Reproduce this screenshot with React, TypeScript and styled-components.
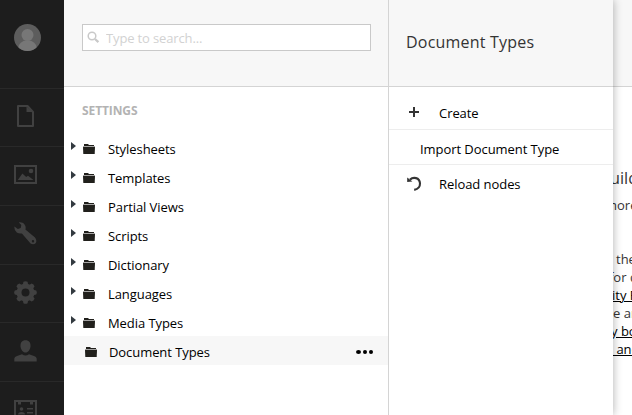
import React from "react";
import styled, { createGlobalStyle } from "styled-components";

const GlobalStyle = createGlobalStyle`
  * { box-sizing: border-box; }
  html, body { margin: 0; padding: 0; overflow: hidden; }
  body { font-family: "Open Sans", sans-serif; font-size: 13px; color: #000; background: #fff; }
  svg { display: block; }
`;

const Shell = styled.div`
  display: flex;
  width: 632px;
  height: 415px;
  overflow: hidden;
`;

const Sidebar = styled.nav`
  flex: 0 0 64px;
  display: grid;
  grid-template-rows: 89px 58px 59px 59px 58px 59px 59px;
  background: #1d1d1d;
`;

const SideItem = styled.div<{ $top: number }>`
  border-bottom: 1px solid #292929;
  padding: ${(p) => p.$top}px 0 0 14px;
  overflow: hidden;
`;

const Column = styled.section`
  display: flex;
  flex-direction: column;
  background: #fff;
`;

const TreeColumn = styled(Column)`
  flex: 0 0 325px;
  position: relative;
  z-index: 2;
  border-right: 1px solid #d4d4d4;
`;

const MenuColumn = styled(Column)`
  flex: 0 0 224px;
  position: relative;
  z-index: 1;
  box-shadow: 0 0 9px rgba(0, 0, 0, 0.32);
`;

const ContentColumn = styled(Column)`
  flex: 1;
  overflow: hidden;
`;

const Header = styled.header`
  flex: 0 0 87px;
  background: #f7f7f7;
  border-bottom: 1px solid #d4d4d4;
`;

const TreeHeader = styled(Header)`
  padding: 24px 17px 0 18px;
`;

const MenuHeader = styled(Header)`
  padding: 30px 0 0 17px;
`;

const SearchBox = styled.label`
  display: flex;
  align-items: center;
  height: 27px;
  padding-left: 4px;
  gap: 6px;
  background: #fff;
  border: 1px solid #c9c9c9;
`;

const SearchInput = styled.input`
  flex: 1;
  min-width: 0;
  height: 24px;
  padding: 1px 0 1px 0;
  border: 0;
  outline: 0;
  background: transparent;
  font: 13px "Open Sans", sans-serif;
  letter-spacing: -0.14px;
  &::placeholder { color: #d2d2d2; opacity: 1; }
`;

const MenuTitle = styled.h1`
  margin: 0;
  font-size: 16px;
  line-height: 24px;
  font-weight: 400;
  letter-spacing: 0.2px;
  color: #343434;
`;

const SectionTitle = styled.h2`
  margin: 0;
  height: 46px;
  padding: 15px 0 0 18px;
  font-size: 12px;
  line-height: 18px;
  font-weight: 700;
  letter-spacing: -0.1px;
  color: #b3b3b3;
`;

const TreeRow = styled.div<{ $active?: boolean }>`
  display: flex;
  align-items: center;
  height: 29px;
  padding: 2px 15px 0 ${(p) => (p.$active ? 21 : 6)}px;
  background: ${(p) => (p.$active ? "#f7f7f7" : "transparent")};
`;

const Caret = styled.span`
  width: 0;
  height: 0;
  margin: -5px 7px 0 1px;
  border: solid transparent;
  border-width: 4px 0 4px 5px;
  border-left-color: #333a40;
`;

const TreeLabel = styled.span<{ $active?: boolean }>`
  margin-left: ${(p) => (p.$active ? 12 : 13)}px;
  line-height: 20px;
  letter-spacing: -0.07px;
`;

const Dots = styled.span`
  display: flex;
  gap: 2px;
  margin: 0 0 0 auto;
`;

const Dot = styled.i`
  width: 4px;
  height: 4px;
  border-radius: 50%;
  background: #000;
  &:first-child { width: 5px; }
`;

const MenuRow = styled.div<{ $height: number; $last?: boolean }>`
  display: grid;
  grid-template-columns: 32px 1fr;
  align-items: center;
  height: ${(p) => p.$height}px;
  padding: ${(p) => (p.$height > 40 ? 10 : 4)}px 0 0 18px;
  border-bottom: 1px solid ${(p) => (p.$last ? "transparent" : "#ededed")};
  letter-spacing: -0.06px;
`;

const MenuTextRow = styled(MenuRow)`
  display: flex;
  padding: 4px 0 0 31px;
`;

const Article = styled.div`
  white-space: nowrap;
  color: #343434;
`;

const ArticleLine = styled.div<{ $gap?: number; $shift: number; $title?: boolean; $link?: boolean }>`
  height: 18px;
  line-height: 18px;
  margin: ${(p) => p.$gap ?? 0}px 0 0 ${(p) => p.$shift}px;
  font-size: ${(p) => (p.$title ? 16.25 : 13)}px;
  color: ${(p) => (p.$link ? "#000" : "#343434")};
  text-decoration: ${(p) => (p.$link ? "underline" : "none")};
`;

const tone = "#414141";

const Avatar = () => (
  <svg width="27" height="27" viewBox="0 0 27 27">
    <clipPath id="avatar"><circle cx="13.5" cy="13.5" r="13.5" /></clipPath>
    <g clipPath="url(#avatar)">
      <rect width="27" height="27" fill="#5d5d5d" />
      <circle cx="13.5" cy="11" r="6" fill="#777" />
      <ellipse cx="13.5" cy="24.5" rx="9.5" ry="8.2" fill="#777" />
    </g>
  </svg>
);

const PageIcon = () => (
  <svg width="23" height="22" viewBox="0 0 23 22">
    <path d="M4 1H13.5L19 7V21H4Z" fill="none" stroke={tone} strokeWidth="2" strokeLinejoin="round" />
    <path d="M12.5 1.5V7H19Z" fill={tone} />
  </svg>
);

const PictureIcon = () => (
  <svg width="23" height="19" viewBox="0 0 23 19">
    <rect x="1" y="1" width="21" height="17" fill="none" stroke={tone} strokeWidth="2" />
    <path d="M3.8 15L8.4 8.5L12.2 12L14 10.8L19.5 15Z" fill={tone} />
    <circle cx="17" cy="6" r="2.3" fill={tone} />
  </svg>
);

const WrenchIcon = () => (
  <svg width="23" height="23" viewBox="0 0 23 23" fill={tone}>
    <path
      fillRule="evenodd"
      d="M4.8 .4Q9.6 0 11.3 3.8Q12 5.6 11.4 7.6L21 15.6Q23.2 18.4 21.8 21Q19.6 23.4 16.6 21.6L7.9 11.4Q5.2 12 2.8 10.4Q-.1 8.2.5 4.5L3.8 7L6.7 6.1L7.3 3.1ZM19 18A1.2 1.2 0 1 0 19 20.4A1.2 1.2 0 1 0 19 18Z"
    />
  </svg>
);

const GearIcon = () => (
  <svg width="23" height="23" viewBox="0 0 23 23">
    <circle cx="11.5" cy="11.5" r="6.5" fill="none" stroke={tone} strokeWidth="5" />
    {[0, 45, 90, 135, 180, 225, 270, 315].map((a) => (
      <path key={a} d="M8.8 4L9.4 .8Q11.5 -.4 13.6 .8L14.2 4Z" fill={tone} transform={`rotate(${a} 11.5 11.5)`} />
    ))}
  </svg>
);

const UserIcon = () => (
  <svg width="23" height="22" viewBox="0 0 23 22" fill={tone}>
    <path d="M11.5 .2C15 .2 16.8 2.8 16.5 6.2C16.2 9.5 14 12.6 11.5 12.6S6.8 9.5 6.5 6.2C6.2 2.8 8 .2 11.5 .2Z" />
    <path d="M.3 21.5V18.5Q.5 16.8 3 16L8 14.3Q11.5 16.8 15 14.3L20 16Q22.5 16.8 22.7 18.5V21.5Z" />
  </svg>
);

const CardIcon = () => (
  <svg width="23" height="20" viewBox="0 0 23 20" fill={tone}>
    <path d="M1 1H22V19H1Z" fill="none" stroke={tone} strokeWidth="2" />
    <path d="M4 2H7V4.5H4ZM16 2H19V4.5H16ZM13 8H19V9.5H13ZM13 12H19V13.5H13Z" />
    <circle cx="7.5" cy="9" r="1.8" />
    <path d="M4 14.5Q4 12 7.5 12T11 14.5Z" />
  </svg>
);

const SearchIcon = () => (
  <svg width="13" height="13" viewBox="0 0 13 13" fill="none" stroke="#c9c9c9">
    <circle cx="5" cy="5" r="3.8" strokeWidth="1.5" />
    <path d="M8 8L11.4 11.1" strokeWidth="2.3" />
  </svg>
);

const FolderIcon = () => (
  <svg width="12" height="11" viewBox="0 0 12 11" fill="#21201c">
    <path d="M1 3V1H5L6 2H11V3Z" />
    <path d="M0 4H12L11.7 11H.3Z" />
    <path d="M0 3.6H12V4H0Z" />
  </svg>
);

const PlusIcon = () => (
  <svg width="14" height="14" viewBox="0 0 14 14">
    <path d="M7 1V11M2 6H12" stroke="#343434" strokeWidth="2" />
  </svg>
);

const ReloadIcon = () => (
  <svg width="15" height="17" viewBox="0 0 15 17">
    <path d="M3 3.6C6.2 .7 12.6 1.3 13 7.4C13.1 10.8 10.8 13.2 7.2 13.9" fill="none" stroke="#343434" strokeWidth="2.1" />
    <path d="M.2 1.4L5.4 5.5L.2 6Z" fill="#343434" />
  </svg>
);

const sections = [
  { id: "profile", top: 24, Icon: Avatar },
  { id: "content", top: 16, Icon: PageIcon },
  { id: "media", top: 18, Icon: PictureIcon },
  { id: "settings", top: 16, Icon: WrenchIcon },
  { id: "developer", top: 16, Icon: GearIcon },
  { id: "users", top: 17, Icon: UserIcon },
  { id: "members", top: 18, Icon: CardIcon },
];

const nodes = ["Stylesheets", "Templates", "Partial Views", "Scripts", "Dictionary", "Languages", "Media Types"];

export default function App() {
  return (
    <>
      <GlobalStyle />
      <Shell>
        <Sidebar>
          {sections.map(({ id, top, Icon }) => (
            <SideItem key={id} $top={top}><Icon /></SideItem>
          ))}
        </Sidebar>
        <TreeColumn>
          <TreeHeader>
            <SearchBox>
              <SearchIcon />
              <SearchInput placeholder="Type to search..." />
            </SearchBox>
          </TreeHeader>
          <SectionTitle>SETTINGS</SectionTitle>
          {nodes.map((name) => (
            <TreeRow key={name}>
              <Caret />
              <FolderIcon />
              <TreeLabel>{name}</TreeLabel>
            </TreeRow>
          ))}
          <TreeRow $active>
            <FolderIcon />
            <TreeLabel $active>Document Types</TreeLabel>
            <Dots><Dot /><Dot /><Dot /></Dots>
          </TreeRow>
        </TreeColumn>
        <MenuColumn>
          <MenuHeader><MenuTitle>Document Types</MenuTitle></MenuHeader>
          <MenuRow $height={43}><PlusIcon /><span>Create</span></MenuRow>
          <MenuTextRow $height={35}>Import Document Type</MenuTextRow>
          <MenuRow $height={35} $last><ReloadIcon /><span>Reload nodes</span></MenuRow>
        </MenuColumn>
        <ContentColumn>
          <Header />
          <Article>
            <ArticleLine $title $gap={82} $shift={-3}>uilding</ArticleLine>
            <ArticleLine $gap={9} $shift={-8}>more</ArticleLine>
            <ArticleLine $gap={36} $shift={3}>the</ArticleLine>
            <ArticleLine $shift={-4}>for d</ArticleLine>
            <ArticleLine $link $shift={-1}>ity F</ArticleLine>
            <ArticleLine $shift={0}>e are</ArticleLine>
            <ArticleLine $link $shift={-2}>y both</ArticleLine>
            <ArticleLine $link $shift={0}>&nbsp;and</ArticleLine>
          </Article>
        </ContentColumn>
      </Shell>
    </>
  );
}
